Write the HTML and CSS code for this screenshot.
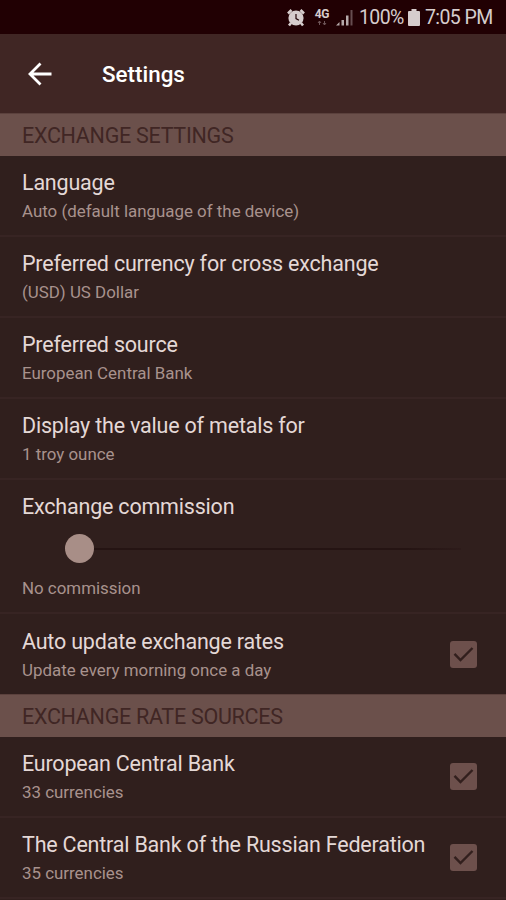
FILE: index.html
```html
<!DOCTYPE html>
<html lang="en">
<head>
<meta charset="utf-8">
<title>Settings</title>
<link rel="stylesheet" href="styles.css">
</head>
<body>
<div class="status">
  <svg class="alarm" width="18" height="18" viewBox="0 0 18 18"><circle cx="9" cy="9" r="7.600" fill="#d6cdcd"/><path d="M1 4.500 4.500 1M13.500 1l3.500 3.500M4 14 2 16.500M14 14l2 2.500" stroke="#d6cdcd" stroke-width="2.6"/><path d="M9 5v4.600l3 1.600" fill="none" stroke="#210306" stroke-width="1.2"/></svg>
  <div class="network"><span>4G</span><svg width="10" height="6" viewBox="0 0 10 6"><path d="M2.5 5V1M1 3l1.500-2L4 3M7.500 1v4M6 3l1.500 2L9 3" fill="none" stroke="#6e5558" stroke-width="1"/></svg></div>
  <svg class="signal" width="17" height="17" viewBox="0 0 17 17"><path d="M0 16.500 3.500 13v3.500zM5.500 11H8v5.500H5.500zM10 6.500h2.500v10H10z" fill="#b5a9aa"/><path d="M14.500 1H16.500v15.500h-2z" fill="#664d50"/></svg>
  <span class="percent">100%</span>
  <svg class="battery" width="12" height="17" viewBox="0 0 12 17"><path d="M3.500 0h5v2H11q1 0 1 1v13q0 1-1 1H1q-1 0-1-1V3q0-1 1-1h2.500z" fill="#d6cdcd"/></svg>
  <span class="time">7:05 PM</span>
</div>
<header class="appbar">
  <svg width="24" height="24" viewBox="0 0 24 24"><path d="M23.500 12H2.500M12.500 1.500 2 12l10.500 10.500" fill="none" stroke="#fff" stroke-width="2.8"/></svg>
  <h1>Settings</h1>
</header>
<main>
  <h2>EXCHANGE SETTINGS</h2>
  <section class="row"><div><h3>Language</h3><p>Auto (default language of the device)</p></div></section>
  <section class="row"><div><h3>Preferred currency for cross exchange</h3><p>(USD) US Dollar</p></div></section>
  <section class="row"><div><h3>Preferred source</h3><p>European Central Bank</p></div></section>
  <section class="row"><div><h3>Display the value of metals for</h3><p>1 troy ounce</p></div></section>
  <section class="row commission"><div><h3>Exchange commission</h3>
    <div class="slider"><span class="thumb"></span><span class="track"></span></div>
    <p>No commission</p></div></section>
  <section class="row last"><div><h3>Auto update exchange rates</h3><p>Update every morning once a day</p></div>
    <svg class="check" width="27" height="27" viewBox="0 0 27 27"><rect width="27" height="27" rx="3" fill="#6d504c"/><path d="M4.500 12.800 10.500 19 22.500 7" fill="none" stroke="#321f1d" stroke-width="2.400"/></svg></section>
  <h2>EXCHANGE RATE SOURCES</h2>
  <section class="row"><div><h3>European Central Bank</h3><p>33 currencies</p></div>
    <svg class="check" width="27" height="27" viewBox="0 0 27 27"><rect width="27" height="27" rx="3" fill="#6d504c"/><path d="M4.500 12.800 10.500 19 22.500 7" fill="none" stroke="#321f1d" stroke-width="2.400"/></svg></section>
  <section class="row"><div><h3>The Central Bank of the Russian Federation</h3><p>35 currencies</p></div>
    <svg class="check" width="27" height="27" viewBox="0 0 27 27"><rect width="27" height="27" rx="3" fill="#6d504c"/><path d="M4.500 12.800 10.500 19 22.500 7" fill="none" stroke="#321f1d" stroke-width="2.400"/></svg></section>
</main>
</body>
</html>
```
FILE: styles.css
```css
* { box-sizing: border-box; }
body { margin: 0; height: 900px; overflow: hidden; background: #301f1d; font-family: Roboto, sans-serif; }
h1, h2, h3, p { margin: 0; font-weight: 400; white-space: nowrap; }
svg { display: block; flex: none; }

.status { display: flex; align-items: center; height: 34px; padding: 1px 0 0 287px; background: #210003; color: #d6cdcd; font-size: 19.5px; letter-spacing: -0.6px; line-height: 34px; white-space: nowrap; }
.network { display: flex; flex-direction: column; align-items: center; width: 16px; margin-left: 9px; font-size: 12px; font-weight: 700; letter-spacing: -0.3px; line-height: 11px; }
.signal { margin-left: 6px; }
.percent { width: 45px; margin-left: 6px; }
.battery { margin-left: 4px; }
.time { margin-left: 5px; }

.appbar { display: flex; align-items: center; height: 79px; padding-left: 28px; background: #402624; color: #fff; }
.appbar h1 { margin-left: 50px; font-size: 22.4px; font-weight: 500; line-height: 30px; }

h2 { height: 43px; padding-left: 22px; background: #6b504b; border-top: 1px solid #5b413d; color: #402624; font-size: 21.5px; letter-spacing: -0.28px; line-height: 43px; }
.row { display: flex; justify-content: space-between; height: 81px; padding: 13px 29px 0 22px; border-bottom: 2px solid #372423; }
.row h3 { color: #e4d8d6; font-size: 21.5px; letter-spacing: -0.2px; line-height: 28px; }
.row p { margin-top: 2px; color: #a8928d; font-size: 16.9px; line-height: 24px; }
.row.last { height: 80px; padding-top: 14px; border-bottom: 0; }
.check { margin-top: 13px; }

.row.commission { height: 134px; }
.slider { display: flex; align-items: center; height: 29px; margin: 13px 0 13px 43px; }
.thumb { width: 29px; height: 29px; border-radius: 50%; background: #a88e87; }
.track { width: 367px; height: 2px; background: linear-gradient(to right, #251413 85%, #2d1b1a); }
.commission p { margin-top: 0; }
```
